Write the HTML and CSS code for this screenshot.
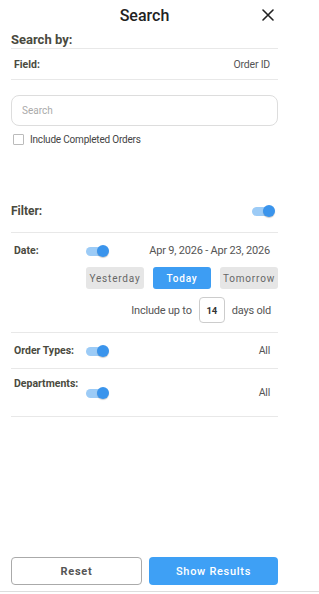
FILE: index.html
```html
<!DOCTYPE html>
<html lang="en">
<head>
    <meta charset="UTF-8">
    <meta name="viewport" content="width=device-width, initial-scale=1.0">
    <title>Search</title>
    <link rel="stylesheet" href="styles.css">
</head>
<body>
    <div class="page">
        <div class="content">
            <header class="top">
                <h1>Search</h1>
                <button class="close" type="button" aria-label="Close">
                    <svg width="12" height="12" viewBox="0 0 12 12">
                        <path d="M1 1 L11 11 M11 1 L1 11" stroke="#222" stroke-width="1.6" stroke-linecap="round"/>
                    </svg>
                </button>
            </header>

            <h2 class="section-title">Search by:</h2>
            <div class="row field-row">
                <span class="label">Field:</span>
                <span class="value">Order ID</span>
            </div>

            <input class="search-box" type="text" placeholder="Search">

            <label class="check">
                <span class="box"></span>
                Include Completed Orders
            </label>

            <div class="filter-head">
                <h2 class="section-title">Filter:</h2>
                <span class="toggle on"></span>
            </div>

            <div class="date-block">
                <div class="date-line">
                    <span class="label">Date:</span>
                    <span class="toggle on"></span>
                    <span class="value push date-range">Apr 9, 2026 - Apr 23, 2026</span>
                </div>
                <div class="day-buttons">
                    <button type="button" class="day">Yesterday</button>
                    <button type="button" class="day active">Today</button>
                    <button type="button" class="day">Tomorrow</button>
                </div>
                <div class="days-old">
                    <span>Include up to</span>
                    <span class="num-box">14</span>
                    <span>days old</span>
                </div>
            </div>

            <div class="row type-row">
                <span class="label">Order Types:</span>
                <span class="toggle on"></span>
                <span class="value push">All</span>
            </div>

            <div class="row dept-row">
                <span class="label">Departments:</span>
                <span class="toggle on"></span>
                <span class="value push">All</span>
            </div>
        </div>

        <div class="actions">
            <button type="button" class="btn btn-reset">Reset</button>
            <button type="button" class="btn btn-show">Show Results</button>
        </div>
        <div class="edge"></div>
    </div>
</body>
</html>
```

FILE: styles.css
```css
* {
    box-sizing: border-box;
    margin: 0;
    padding: 0;
    font-family: Roboto, "Liberation Sans", sans-serif;
}
body {
    background: #fff;
    color: #444;
}
.page {
    height: 100vh;
    display: flex;
    flex-direction: column;
}
.content {
    padding: 0 41px 0 11px;
}
.top {
    height: 30px;
    display: flex;
    align-items: center;
    justify-content: center;
    position: relative;
}
.top h1 {
    font-size: 16px;
    font-weight: 500;
    color: #222;
}
.close {
    position: absolute;
    right: 4px;
    top: 9px;
    background: none;
    border: none;
    width: 12px;
    height: 12px;
    display: flex;
}
.section-title {
    font-size: 13px;
    font-weight: 700;
    color: #4a4a3e;
    line-height: 16px;
}
h2.section-title {
    padding-top: 2px;
    border-bottom: 1px solid #e8e8e8;
}
.label {
    font-size: 10.5px;
    font-weight: 700;
    color: #4a4a3e;
    padding-left: 3px;
}
.value {
    font-size: 10.5px;
    color: #555;
    letter-spacing: -0.2px;
    padding-right: 8px;
}
.date-range {
    font-size: 11px;
}
.push {
    margin-left: auto;
}
.row {
    display: flex;
    align-items: center;
    border-bottom: 1px solid #e8e8e8;
}
.field-row {
    height: 31px;
    justify-content: space-between;
}
.search-box {
    display: block;
    width: 100%;
    height: 31px;
    margin-top: 15px;
    border: 1px solid #ddd;
    border-radius: 8px;
    padding: 0 10px;
    font-size: 10px;
    color: #444;
    outline: none;
}
.search-box::placeholder {
    color: #aaa;
}
.check {
    display: flex;
    align-items: center;
    gap: 6px;
    margin-top: 8px;
    padding-left: 2px;
    font-size: 10px;
    color: #444;
    letter-spacing: -0.2px;
}
.check .box {
    width: 11px;
    height: 11px;
    border: 1px solid #bbb;
    border-radius: 1px;
}
.filter-head {
    display: flex;
    align-items: center;
    justify-content: space-between;
    margin-top: 55px;
    padding: 0 3px 10px 0;
    border-bottom: 1px solid #e8e8e8;
}
.filter-head .section-title {
    border: none;
    padding: 0;
    font-size: 12px;
    line-height: 22px;
}
.toggle {
    position: relative;
    display: inline-block;
    width: 23px;
    height: 12px;
}
.toggle::before {
    content: "";
    position: absolute;
    left: 0;
    top: 2px;
    width: 18px;
    height: 9px;
    border-radius: 5px;
    background: #9ccbf6;
}
.toggle::after {
    content: "";
    position: absolute;
    right: 0;
    top: 0;
    width: 12px;
    height: 12px;
    border-radius: 50%;
    background: #3a94ec;
    box-shadow: 0 1px 1px rgba(0, 0, 0, 0.2);
}
.date-block {
    border-bottom: 1px solid #e8e8e8;
    padding-bottom: 9px;
}
.date-line {
    display: flex;
    align-items: center;
    height: 34px;
    padding-top: 1px;
}
.date-line .label,
.type-row .label,
.dept-row .label {
    width: 75px;
}
.day-buttons {
    display: flex;
    gap: 9px;
    margin-left: 75px;
}
.day {
    flex: 1;
    height: 22px;
    border: none;
    border-radius: 3px;
    background: #e6e6e6;
    color: #666;
    font-size: 10px;
    letter-spacing: 0.8px;
    overflow: hidden;
    white-space: nowrap;
}
.day.active {
    background: #3d9df3;
    color: #fff;
    font-weight: 500;
}
.days-old {
    display: flex;
    align-items: center;
    justify-content: flex-end;
    gap: 7px;
    margin-top: 8px;
    padding-right: 7px;
    font-size: 11px;
    color: #555;
    letter-spacing: -0.2px;
}
.num-box {
    width: 26px;
    height: 26px;
    border: 1px solid #ccc;
    border-radius: 4px;
    display: flex;
    align-items: center;
    justify-content: center;
    font-weight: 700;
    color: #333;
    font-size: 9.5px;
}
.type-row {
    height: 36px;
}
.dept-row {
    height: 48px;
}
.dept-row .label {
    align-self: flex-start;
    padding-top: 8px;
    line-height: 14px;
}
.actions {
    margin-top: auto;
    display: flex;
    gap: 7px;
    padding: 0 41px 6px 11px;
}
.btn {
    flex: 1;
    height: 28px;
    border-radius: 4px;
    font-size: 11px;
    font-weight: 700;
    letter-spacing: 0.7px;
}
.btn-reset {
    background: #fff;
    border: 1px solid #aaa;
    color: #555;
}
.btn-show {
    background: #3ea0f5;
    border: none;
    color: #fff;
    font-weight: 500;
}
.edge {
    height: 3px;
    border-top: 1px solid #ddd;
}
```
